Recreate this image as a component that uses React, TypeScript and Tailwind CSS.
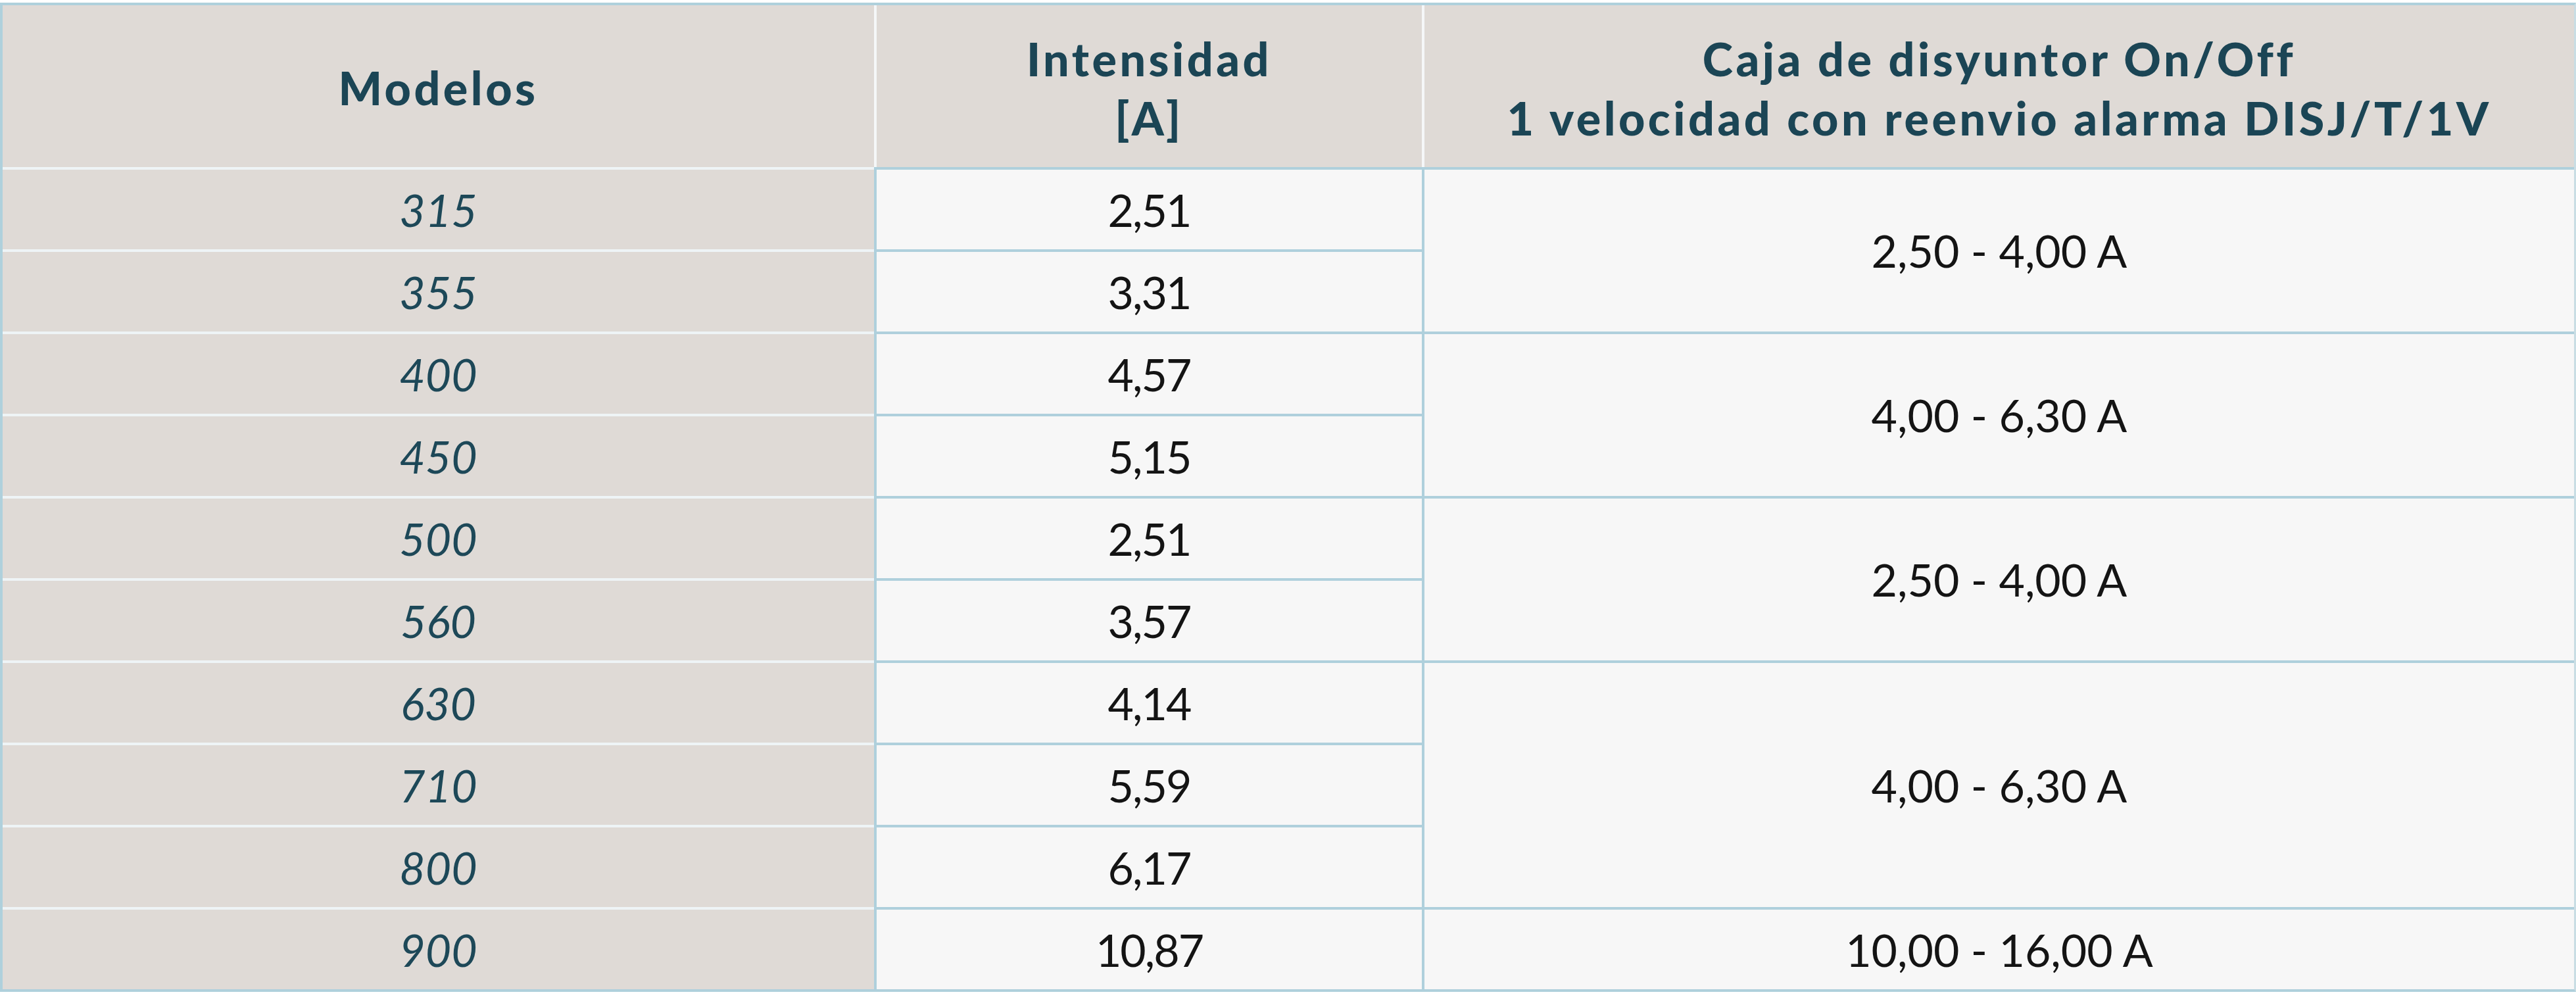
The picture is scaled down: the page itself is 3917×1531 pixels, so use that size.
import React from "react";

const models = ["315", "355", "400", "450", "500", "560", "630", "710", "800", "900"];
const intens = ["2,51", "3,31", "4,57", "5,15", "2,51", "3,57", "4,14", "5,59", "6,17", "10,87"];
const groups: { h: string; text: string }[] = [
  { h: "h-[250px]", text: "2,50 - 4,00 A" },
  { h: "h-[250px]", text: "4,00 - 6,30 A" },
  { h: "h-[250px]", text: "2,50 - 4,00 A" },
  { h: "h-[375px]", text: "4,00 - 6,30 A" },
  { h: "h-[125px]", text: "10,00 - 16,00 A" },
];

const headFont = "font-['Lato',sans-serif] font-black text-[70px] leading-[90px] tracking-[4.5px] text-[#1b4555]";
const dataFont = "font-['Lato',sans-serif] text-[68px] leading-none";

export default function App() {
  return (
    <div className="w-[3917px] h-[1531px] bg-white pt-[4px]">
      <div className="w-[3917px] border-t-4 border-l-4 border-b-4 border-[#afd0dc] border-r-[3px] border-r-[#c9dde4]">
        {/* header */}
        <div className="flex h-[246px] bg-[#dfdad6]">
          <div className={`w-[1325px] flex items-center justify-center pt-[4px] ${headFont}`}>Modelos</div>
          <div className="w-[4px] bg-[#f5f7f8]" />
          <div className={`w-[829px] flex flex-col items-center justify-center text-center pt-[6px] ${headFont}`}>
            <span>Intensidad</span>
            <span>[A]</span>
          </div>
          <div className="w-[4px] bg-[#f5f7f8]" />
          <div className={`flex-1 flex flex-col items-center justify-center text-center pt-[6px] ${headFont}`}>
            <span>Caja de disyuntor On/Off</span>
            <span>1 velocidad con reenvio alarma DISJ/T/1V</span>
          </div>
        </div>
        {/* body */}
        <div className="flex">
          <div className="w-[1325px] flex flex-col">
            {models.map((m, i) => (
              <div
                key={i}
                className={`h-[125px] border-t-4 border-[#eef4f6] bg-[#dfdad6] flex items-center justify-center italic text-[#1d4858] ${dataFont}`}
              >
                {m}
              </div>
            ))}
          </div>
          <div className="w-[4px] bg-[#afd0dc]" />
          <div className="w-[829px] flex flex-col">
            {intens.map((v, i) => (
              <div
                key={i}
                className={`h-[125px] border-t-4 border-[#afd0dc] bg-[#f7f7f7] flex items-center justify-center text-[#141414] tracking-[-2px] ${dataFont}`}
              >
                {v}
              </div>
            ))}
          </div>
          <div className="w-[4px] bg-[#afd0dc]" />
          <div className="flex-1 flex flex-col">
            {groups.map((g, i) => (
              <div
                key={i}
                className={`${g.h} border-t-4 border-[#afd0dc] bg-[#f7f7f7] flex items-center justify-center text-[#141414] ${dataFont}`}
              >
                {g.text}
              </div>
            ))}
          </div>
        </div>
      </div>
    </div>
  );
}
